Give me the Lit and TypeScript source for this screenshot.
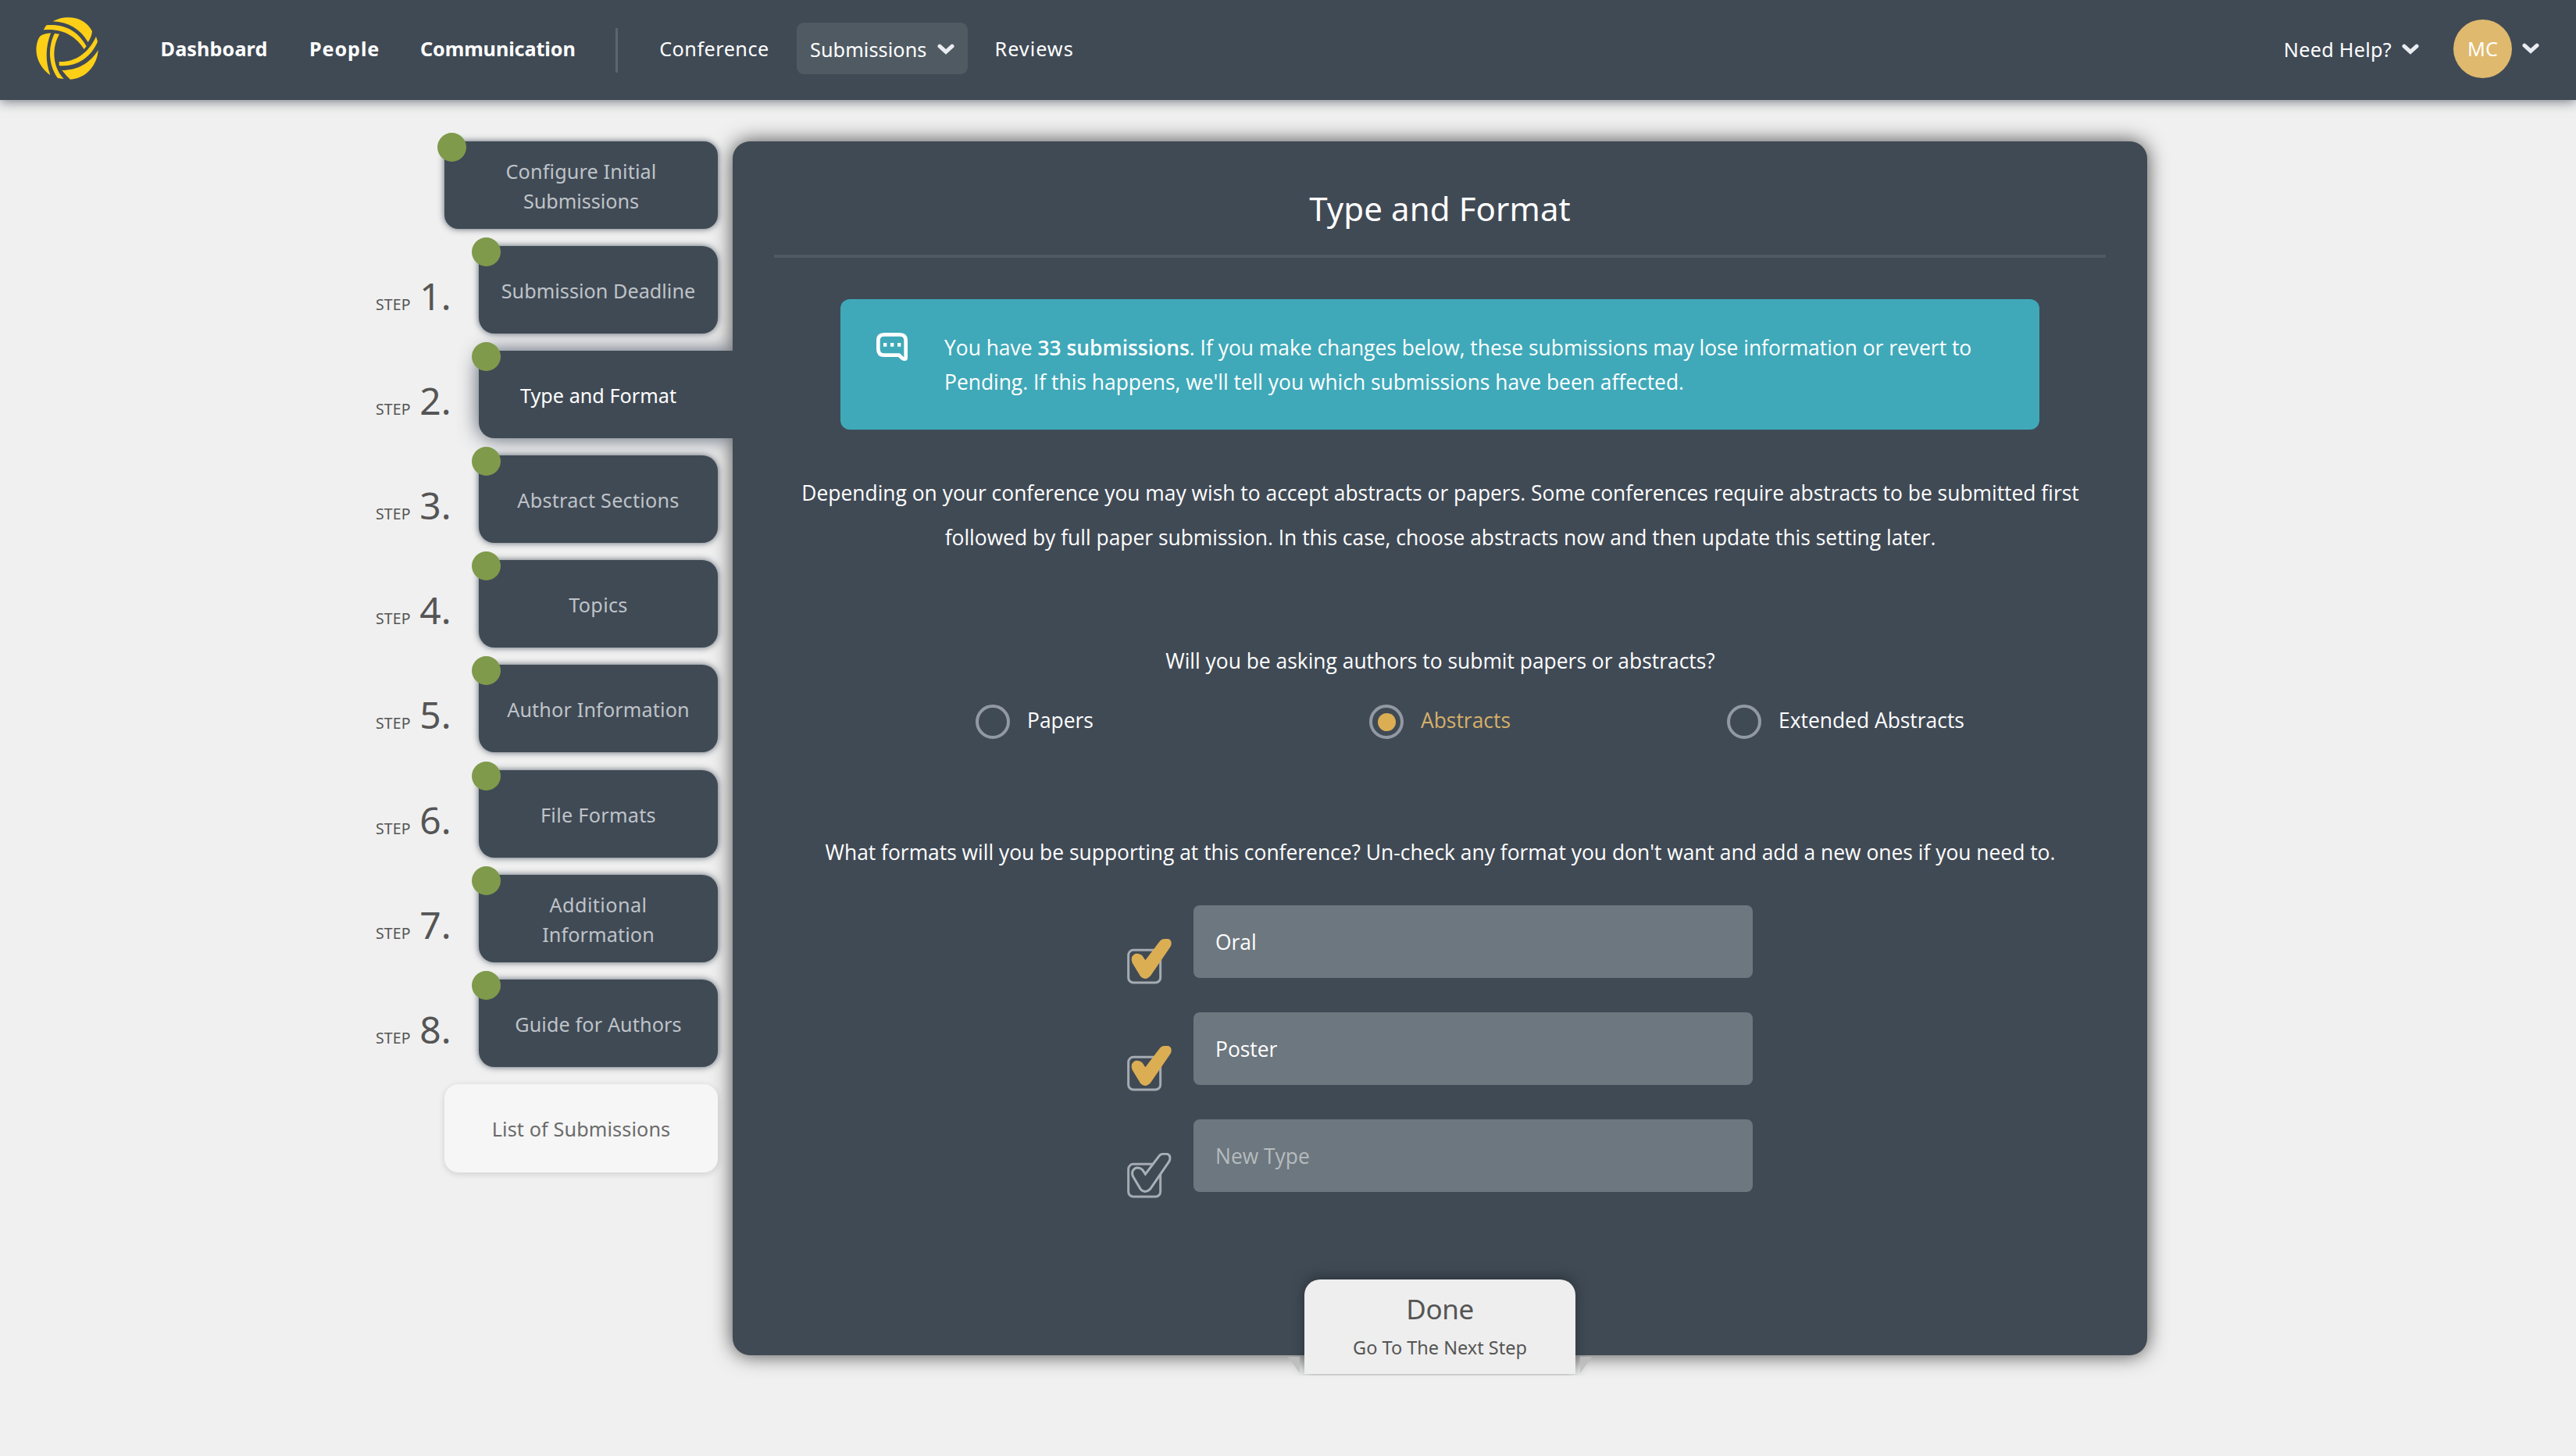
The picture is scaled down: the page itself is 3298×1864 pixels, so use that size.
import { LitElement, html, css, svg } from "lit";
import { customElement } from "lit/decorators.js";

interface Label {
  text: string;
  tracking: number;
}

interface Step {
  lines: Label[];
  active?: boolean;
}

const STEPS: Step[] = [
  { lines: [{ text: "Submission Deadline", tracking: 0.03 }] },
  { lines: [{ text: "Type and Format", tracking: 0.02 }], active: true },
  { lines: [{ text: "Abstract Sections", tracking: 0.25 }] },
  { lines: [{ text: "Topics", tracking: 0.3 }] },
  { lines: [{ text: "Author Information", tracking: 0.15 }] },
  { lines: [{ text: "File Formats", tracking: 0.3 }] },
  {
    lines: [
      { text: "Additional", tracking: 0.43 },
      { text: "Information", tracking: 0.11 },
    ],
  },
  { lines: [{ text: "Guide for Authors", tracking: 0.12 }] },
];

const RADIOS = [
  { text: "Papers", on: false },
  { text: "Abstracts", on: true },
  { text: "Extended Abstracts", on: false },
];

const FORMATS = [
  { text: "Oral", on: true },
  { text: "Poster", on: true },
  { text: "New Type", on: false },
];

const label = (l: Label) =>
  html`<span style="letter-spacing:${l.tracking}px">${l.text}</span>`;

const chevron = html`<svg class="chevron" viewBox="0 0 22 14">
  <path d="M3 3.2 L11 10.4 L19 3.2" />
</svg>`;

const logo = html`<svg class="logo" viewBox="0 0 360 330">
  <path d="M113 52 C160 25 235 32 264 90 Q262 112 248 132 C218 82 175 55 113 52Z" />
  <path d="M77 85 L88 67 C155 60 210 88 242 148 L233 159 C200 108 150 78 77 85Z" />
  <path d="M105 97 C85 150 83 205 103 258 C55 225 36 165 59 116 Q68 99 105 97Z" />
  <path d="M120 98 L138 101 C105 160 115 230 155 273 L132 270 C96 220 93 150 120 98Z" />
  <path d="M287 162 C284 220 240 272 180 275 Q165 262 148 240 C205 240 255 215 287 162Z" />
  <path d="M279 110 L285 130 C258 195 200 228 137 222 L137 207 C195 210 250 175 279 110Z" />
</svg>`;

const speech = html`<svg class="speech" viewBox="0 0 120 108">
  <path
    class="bubble"
    d="M30 7 H90 Q113 7 113 30 V96 Q113 101 108 101 Q103 101 100 98 L87 86 H30 Q7 86 7 62 V30 Q7 7 30 7Z"
  />
  <path class="dots" d="M27 39 h13 v14 h-13z M54 39 h13 v14 h-13z M81 39 h13 v14 h-13z" />
</svg>`;

const tick =
  "M58 64 L70 82 L126 8 Q132 0 142 0 H158 Q171 3 170 20 Q169 28 164 34 L90 142 Q80 153 69 153 Q57 152 50 142 L20 92 Q15 82 18 70 Q25 56 38 56 Q50 56 58 64Z";

const checkbox = (on: boolean) => html`<svg class="check" viewBox="0 0 171 174">
  <rect x="5" y="43" width="123" height="125" rx="19" />
  ${on
    ? svg`<path class="tick-on" d=${tick} />`
    : svg`<path class="tick-off" transform="translate(4 4) scale(.945)" d=${tick} />`}
</svg>`;

@customElement("app-header")
export class AppHeader extends LitElement {
  static styles = css`
    :host {
      display: flex;
      align-items: center;
      box-sizing: border-box;
      height: 128px;
      padding: 0 47px 4px 30px;
      background: #404a55;
      box-shadow: 0 2px 14px rgba(50, 60, 70, 0.65);
      color: #fff;
      font: 25.2px/40px "Noto Sans", "Open Sans", sans-serif;
      position: relative;
      z-index: 2;
    }
    .logo {
      width: 120px;
      height: 110px;
      margin-top: 6px;
      fill: #fdcf17;
    }
    nav {
      display: grid;
      grid-template-columns: 190.4px 142px 250.5px 55.7px 175.8px 253.5px auto;
      align-items: center;
      margin-left: 55.6px;
    }
    .strong {
      font-weight: 700;
    }
    .divider {
      width: 3px;
      height: 57px;
      margin-top: 5px;
      background: #5a6570;
    }
    .pill {
      display: flex;
      align-items: center;
      justify-self: start;
      gap: 13px;
      box-sizing: border-box;
      width: 219px;
      height: 66px;
      padding: 2px 0 0 17px;
      border-radius: 9px;
      background: #4f5a62;
    }
    .chevron {
      width: 22px;
      height: 14px;
      fill: none;
      stroke: #e9edf1;
      stroke-width: 5;
      stroke-linecap: round;
    }
    .help {
      display: flex;
      align-items: center;
      gap: 13px;
      margin: 2px 0 0 auto;
    }
    .avatar {
      display: flex;
      align-items: center;
      justify-content: center;
      width: 75px;
      height: 75px;
      margin: 0 13px 0 44px;
      border-radius: 50%;
      background: #dfb96d;
    }
  `;

  render() {
    return html`
      ${logo}
      <nav>
        <span class="strong">${label({ text: "Dashboard", tracking: 0.1 })}</span>
        <span class="strong">${label({ text: "People", tracking: 0.9 })}</span>
        <span class="strong">${label({ text: "Communication", tracking: -0.1 })}</span>
        <span class="divider"></span>
        ${label({ text: "Conference", tracking: 0.5 })}
        <span class="pill">${label({ text: "Submissions", tracking: 0.1 })}${chevron}</span>
        ${label({ text: "Reviews", tracking: 1 })}
      </nav>
      <span class="help">${label({ text: "Need Help?", tracking: 0.28 })}${chevron}</span>
      <span class="avatar">MC</span>
      ${chevron}
    `;
  }
}

@customElement("step-sidebar")
export class StepSidebar extends LitElement {
  static styles = css`
    :host {
      display: flex;
      flex-direction: column;
      gap: 22.1px;
      width: 457px;
      position: relative;
      z-index: 1;
      font: 25.2px/38px "Noto Sans", "Open Sans", sans-serif;
      color: #555;
    }
    .row {
      display: flex;
      height: 112px;
    }
    .step {
      display: flex;
      align-items: baseline;
      width: 132px;
      padding-top: 14px;
      line-height: 99px;
    }
    .word {
      width: 56px;
      font-size: 19.5px;
      letter-spacing: 0.1px;
    }
    .num {
      width: 40.5px;
      font-size: 48px;
      text-align: right;
    }
    .tab {
      display: flex;
      flex-direction: column;
      align-items: center;
      justify-content: center;
      box-sizing: border-box;
      position: relative;
      width: 306px;
      height: 112px;
      padding-top: 2px;
      border-radius: 20px;
      background: #404a55;
      box-shadow: 0 0 9px rgba(50, 62, 76, 0.8);
      color: #bfc3c8;
    }
    .wide {
      width: 350px;
      margin-left: 88px;
      border-radius: 18px;
    }
    .active {
      width: 325px;
      padding-right: 19px;
      border-radius: 20px 0 0 20px;
      box-shadow: 0 0 26px rgba(40, 52, 72, 0.8);
      clip-path: inset(-40px 0 -40px -40px);
      color: #fff;
    }
    .dot {
      position: absolute;
      left: -9px;
      top: -11px;
      width: 37px;
      height: 37px;
      border-radius: 50%;
      background: #7f9a4b;
    }
    .list {
      height: 113px;
      background: #f6f6f6;
      box-shadow: 0 2px 8px rgba(0, 0, 0, 0.14);
      color: #6b6b6b;
    }
  `;

  render() {
    return html`
      <div class="tab wide">
        <i class="dot"></i>
        ${label({ text: "Configure Initial", tracking: 0.15 })}
        ${label({ text: "Submissions", tracking: -0.04 })}
      </div>
      ${STEPS.map(
        (s, i) => html`<div class="row">
          <div class="step"><span class="word">STEP</span><span class="num">${i + 1}.</span></div>
          <div class="tab ${s.active ? "active" : ""}">
            <i class="dot"></i>${s.lines.map(label)}
          </div>
        </div>`
      )}
      <div class="tab wide list">${label({ text: "List of Submissions", tracking: 0.12 })}</div>
    `;
  }
}

@customElement("format-panel")
export class FormatPanel extends LitElement {
  static styles = css`
    :host {
      display: flex;
      flex-direction: column;
      box-sizing: border-box;
      width: 1811px;
      height: 1554px;
      padding: 56px 52px 0;
      border-radius: 22px;
      background: #404a55;
      box-shadow: 0 0 26px rgba(0, 0, 0, 0.7);
      color: #fff;
      font: 26.42px/44px "Open Sans", "Noto Sans", sans-serif;
    }
    h1 {
      margin: 0;
      font: 400 42px/60px "Noto Sans", "Open Sans", sans-serif;
      letter-spacing: 0.1px;
      text-align: center;
    }
    .rule {
      height: 4px;
      margin: 29px 1px 0;
      background: #4e5964;
    }
    .alert {
      display: flex;
      align-items: flex-start;
      gap: 47px;
      box-sizing: border-box;
      height: 167px;
      margin: 53px 86px 0;
      padding: 39px 0 0 46px;
      border-radius: 12px;
      background: #3fa9b9;
      font-size: 26.4px;
      line-height: 43.7px;
    }
    .speech {
      width: 40px;
      height: 36px;
      margin-top: 4px;
    }
    .bubble {
      fill: none;
      stroke: #fff;
      stroke-width: 14;
    }
    .dots {
      fill: #fff;
    }
    p {
      margin: 0;
      padding-left: 1px;
      text-align: center;
      white-space: nowrap;
    }
    b {
      font-weight: 600;
    }
    .alert p {
      margin-top: 2px;
      padding: 0;
      text-align: left;
    }
    .intro {
      margin-top: 53px;
      line-height: 57px;
    }
    .question {
      margin-top: 107px;
    }
    .radios {
      display: grid;
      grid-template-columns: 504px 458px auto;
      margin: 34px 0 0 259px;
    }
    .radio {
      display: flex;
      align-items: flex-start;
      gap: 22px;
      height: 44px;
    }
    .radio span {
      margin-top: -2px;
    }
    .ring {
      display: flex;
      align-items: center;
      justify-content: center;
      box-sizing: border-box;
      width: 44px;
      height: 44px;
      border: 4px solid #9299a2;
      border-radius: 50%;
    }
    .on .ring::after {
      content: "";
      width: 23px;
      height: 23px;
      border-radius: 50%;
      background: #dbae54;
    }
    .on span {
      color: #d6b069;
    }
    .supported {
      margin-top: 123px;
    }
    .formats {
      display: flex;
      flex-direction: column;
      gap: 44px;
      margin: 46px 0 0 453px;
    }
    .format {
      display: flex;
      align-items: flex-start;
      gap: 28px;
      height: 93px;
    }
    .check {
      width: 57px;
      height: 58px;
      margin-top: 43px;
    }
    .check rect {
      fill: none;
      stroke: #a5abb2;
      stroke-width: 9;
    }
    .tick-on {
      fill: #dbae54;
    }
    .tick-off {
      fill: #404a55;
      stroke: #a9b0b7;
      stroke-width: 9.5;
    }
    .field {
      display: flex;
      align-items: center;
      box-sizing: border-box;
      width: 716px;
      height: 93px;
      padding-left: 28px;
      border-radius: 8px;
      background: #6d777f;
    }
    .muted {
      color: #b6bbbe;
    }
    .done {
      display: flex;
      flex-direction: column;
      align-items: center;
      align-self: center;
      box-sizing: border-box;
      position: relative;
      width: 347px;
      height: 121px;
      margin: auto 0 -24px;
      padding-top: 16px;
      border-radius: 20px 20px 0 0;
      background: #eee;
      box-shadow: 0 -3px 16px rgba(20, 30, 34, 0.5);
      clip-path: inset(-30px -30px -2px);
      color: #555;
      font: 23.5px/40px "Noto Sans", "Open Sans", sans-serif;
    }
    .big {
      font-size: 35px;
      line-height: 43px;
      letter-spacing: -0.4px;
    }
    .small {
      margin-top: 8px;
    }
    .ear {
      position: absolute;
      bottom: 1px;
      width: 15px;
      height: 21px;
      background: linear-gradient(#b9b9b9, #c6c6c6);
    }
    .ear.l {
      left: -21px;
      clip-path: polygon(0 0, 100% 0, 100% 100%);
    }
    .ear.r {
      right: -21px;
      clip-path: polygon(0 0, 100% 0, 0 100%);
    }
  `;

  render() {
    return html`
      <h1>Type and Format</h1>
      <div class="rule"></div>
      <div class="alert">
        ${speech}
        <p>
          You have <b>33 submissions</b>. If you make changes below, these submissions may lose
          information or revert to<br />Pending. If this happens, we'll tell you which submissions
          have been affected.
        </p>
      </div>
      <p class="intro">
        Depending on your conference you may wish to accept abstracts or papers. Some conferences
        require abstracts to be submitted first<br />followed by full paper submission. In this
        case, choose abstracts now and then update this setting later.
      </p>
      <p class="question">Will you be asking authors to submit papers or abstracts?</p>
      <div class="radios">
        ${RADIOS.map(
          (r) => html`<div class="radio ${r.on ? "on" : ""}">
            <i class="ring"></i><span>${r.text}</span>
          </div>`
        )}
      </div>
      <p class="supported">
        What formats will you be supporting at this conference? Un-check any format you don't want
        and add a new ones if you need to.
      </p>
      <div class="formats">
        ${FORMATS.map(
          (f) => html`<div class="format">
            ${checkbox(f.on)}
            <div class="field ${f.on ? "" : "muted"}">${f.text}</div>
          </div>`
        )}
      </div>
      <div class="done">
        <i class="ear l"></i><i class="ear r"></i>
        <span class="big">Done</span>
        <span class="small">Go To The Next Step</span>
      </div>
    `;
  }
}

@customElement("app-root")
export class AppRoot extends LitElement {
  static styles = css`
    :host {
      display: block;
      box-sizing: border-box;
      height: 1864px;
      overflow: hidden;
      background: #f0f0f0;
    }
    main {
      display: flex;
      align-items: flex-start;
      padding: 53px 0 0 481px;
    }
  `;

  render() {
    return html`
      <app-header></app-header>
      <main>
        <step-sidebar></step-sidebar>
        <format-panel></format-panel>
      </main>
    `;
  }
}
